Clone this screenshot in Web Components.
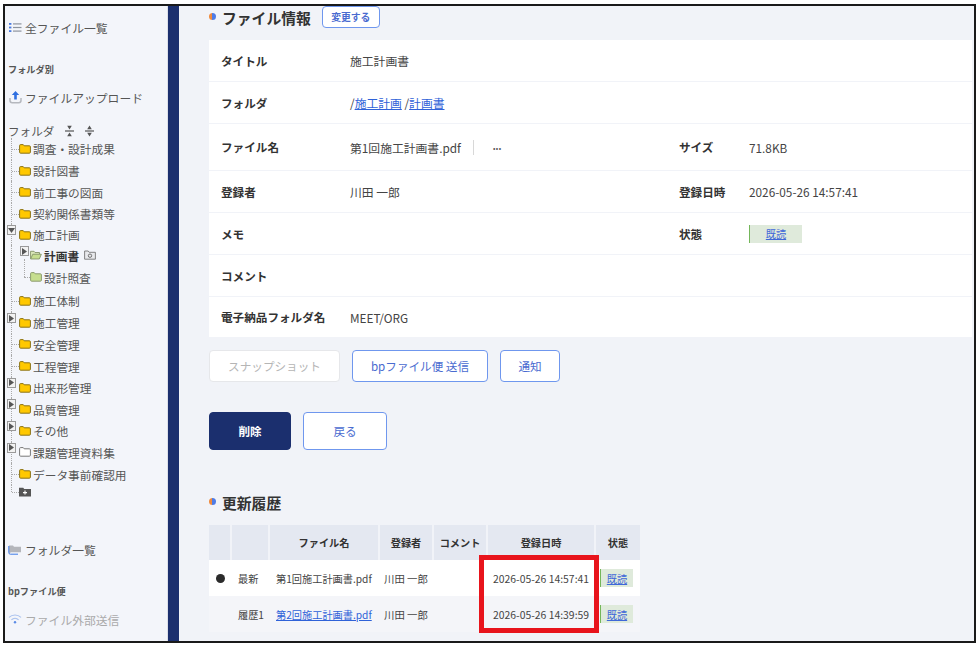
<!DOCTYPE html>
<html lang="ja">
<head>
<meta charset="utf-8">
<title>ファイル情報</title>
<style>
  html, body { margin: 0; padding: 0; background: #fff; }
  body {
    font-family: "Noto Sans CJK JP", "Noto Sans", sans-serif;
    color: #444;
  }
</style>
</head>
<body>
<app-frame>
  <side-nav slot="side"></side-nav>

  <section-title>ファイル情報<action-btn slot="action" kind="small">変更する</action-btn></section-title>

  <info-panel>
    <info-row label="タイトル" style="--h:42px">施工計画書</info-row>
    <info-row label="フォルダ" style="--h:42px">/<a href="#">施工計画</a> /<a href="#">計画書</a></info-row>
    <info-row label="ファイル名" label2="サイズ" style="--h:47px">
      <span class="file">第1回施工計画書.pdf</span><span class="more">•••</span>
      <span slot="second">71.8KB</span>
    </info-row>
    <info-row label="登録者" label2="登録日時" style="--h:42px">
      川田 一郎
      <span slot="second">2026-05-26 14:57:41</span>
    </info-row>
    <info-row label="メモ" label2="状態" style="--h:42px">
      <status-tag slot="second" wide>既読</status-tag>
    </info-row>
    <info-row label="コメント" style="--h:42px"></info-row>
    <info-row label="電子納品フォルダ名" style="--h:40px" last>MEET/ORG</info-row>
  </info-panel>

  <button-row style="--top:13px">
    <action-btn kind="disabled" style="--w:131px">スナップショット</action-btn>
    <action-btn style="--w:136px">bpファイル便 送信</action-btn>
    <action-btn style="--w:60px">通知</action-btn>
  </button-row>
  <button-row style="--top:30px">
    <action-btn kind="primary" style="--w:82px;--bh:38px">削除</action-btn>
    <action-btn style="--w:84px;--bh:38px">戻る</action-btn>
  </button-row>

  <section-title style="--top:41px">更新履歴</section-title>
  <history-table></history-table>
</app-frame>

<script>
const ICONS = {
  list: '<svg width="13" height="11" viewBox="0 0 13 11"><g fill="#4a7be0"><rect x="0" y="1" width="2.4" height="1.8"/><rect x="0" y="4.6" width="2.4" height="1.8"/><rect x="0" y="8.2" width="2.4" height="1.8"/></g><g fill="#8d949e"><rect x="4" y="1.3" width="8.5" height="1.2"/><rect x="4" y="4.9" width="8.5" height="1.2"/><rect x="4" y="8.5" width="8.5" height="1.2"/></g></svg>',
  upload: '<svg width="13" height="14" viewBox="0 0 13 14"><path d="M1 8v2.5A2.2 2.2 0 0 0 3.2 12.7h6.6A2.2 2.2 0 0 0 12 10.5V8" fill="none" stroke="#b5b8be" stroke-width="1.5"/><path d="M6.5 1 10.2 5H7.8v4.6H5.2V5H2.8z" fill="#2f6fe0"/></svg>',
  folders: '<svg width="14" height="12" viewBox="0 0 14 12"><path d="M1 10.5V2.5h4l1 1.2h7v5.6H3" fill="#b4b6bb"/><path d="M.8 3v6.6a1.6 1.6 0 0 0 1.6 1.6H10" fill="none" stroke="#3f7be6" stroke-width="1"/></svg>',
  wifi: '<svg width="14" height="10" viewBox="0 0 14 10"><g fill="none" stroke="#a9c1ee" stroke-width="1.1"><path d="M1 3.4a8.6 8.6 0 0 1 12 0"/><path d="M3.4 5.8a5.2 5.2 0 0 1 7.2 0"/></g><circle cx="7" cy="8.3" r="1.2" fill="#5b8be6"/></svg>',
  shrink: '<svg width="11" height="12" viewBox="0 0 11 12"><rect x="1" y="5.4" width="9" height="1.2" fill="#555"/><path d="M5.5 4.6 3.2.8h4.6zM5.5 7.4l2.3 3.8H3.2z" fill="#555"/></svg>',
  grow: '<svg width="11" height="12" viewBox="0 0 11 12"><rect x="1" y="5.4" width="9" height="1.2" fill="#555"/><path d="M5.5.6 7.8 4.2H3.2zM5.5 11.4 3.2 7.8h4.6z" fill="#555"/></svg>',
  camera: '<svg width="12" height="10" viewBox="0 0 12 10"><path d="M.6 9.2V1h3.6l1 1.3h6.2v6.9z" fill="#e8e9ec" stroke="#777" stroke-width=".9"/><circle cx="6" cy="5.7" r="1.7" fill="none" stroke="#666" stroke-width=".9"/></svg>'
};

function folderIcon(type) {
  const colors = {
    yellow: ['#ffc800', '#8a7318'],
    green: ['#c6de8f', '#8d9c70'],
    white: ['#fff', '#777']
  };
  if (type === 'open') {
    return '<svg width="13" height="10" viewBox="0 0 13 10"><path d="M.6 9.2V1h3.800l1 1.300h4.900v1.900" fill="#dbe8b8" stroke="#87966a"/><path d="M.7 9.3 3 4.200h9.300l-2.200 5.100z" fill="#c6de8f" stroke="#87966a"/></svg>';
  }
  if (type === 'add') {
    return '<svg width="12" height="10" viewBox="0 0 12 10"><path d="M0 9.600V.8h4.200l1 1.200H12v7.600z" fill="#555"/><path d="M6 3.600v4M4 5.600h4" stroke="#fff" stroke-width="1.100"/></svg>';
  }
  const [fill, line] = colors[type];
  return `<svg width="12" height="10" viewBox="0 0 12 10"><path d="M.6 8.2V1.600a1 1 0 0 1 1-1h2.600l1 1.200h5.200a1 1 0 0 1 1 1v5.400a1 1 0 0 1-1 1H1.600a1 1 0 0 1-1-1z" fill="${fill}" stroke="${line}" stroke-width="1"/></svg>`;
}

class AppFrame extends HTMLElement {
  constructor() {
    super();
    this.attachShadow({ mode: 'open' });
    this.shadowRoot.innerHTML = `
      <style>
        :host {
          display: flex;
          box-sizing: border-box;
          width: 973px;
          height: 639px;
          margin: 4px 0 0 3px;
          border: 2px solid #1a1a1a;
          overflow: hidden;
          background: #f1f3f8;
        }
        .bar { width: 11px; flex: none; background: #1b2f6e; }
        main { flex: 1; min-width: 0; padding: 0 2px 0 30px; }
      </style>
      <slot name="side"></slot>
      <div class="bar"></div>
      <main><slot></slot></main>
    `;
  }
}

class NavLink extends HTMLElement {
  constructor() {
    super();
    this.attachShadow({ mode: 'open' });
    this.shadowRoot.innerHTML = `
      <style>
        :host {
          display: flex;
          align-items: center;
          box-sizing: border-box;
          height: 22px;
          padding: 0 0 2px 3px;
          gap: 3px;
          font-size: 11.8px;
          color: var(--c, #555);
          margin-top: var(--top, 0);
          white-space: nowrap;
        }
        .ic { width: 14px; display: flex; justify-content: center; }
      </style>
      <span class="ic"><slot name="icon"></slot></span>
      <slot></slot>
    `;
  }
  connectedCallback() {
    const name = this.getAttribute('icon');
    if (name) {
      const holder = document.createElement('span');
      holder.slot = 'icon';
      holder.style.cssText = 'display:flex';
      holder.innerHTML = ICONS[name];
      this.appendChild(holder);
    }
  }
}

class TreeRow extends HTMLElement {
  constructor() {
    super();
    this.attachShadow({ mode: 'open' });
  }

  connectedCallback() {
    const inner = this.hasAttribute('inner');
    const toggle = this.getAttribute('toggle');
    const type = this.getAttribute('folder') || 'yellow';
    const box = toggle
      ? `<span class="box">${toggle === 'open'
          ? '<svg width="7" height="5" viewBox="0 0 7 5"><path d="M0 0h7L3.500 5z" fill="#555"/></svg>'
          : '<svg width="5" height="7" viewBox="0 0 5 7"><path d="M0 0l5 3.500L0 7z" fill="#555"/></svg>'}</span>`
      : '';
    this.shadowRoot.innerHTML = `
      <style>
        :host {
          display: flex;
          align-items: center;
          position: relative;
          height: var(--h, 21.6px);
          padding-left: ${inner ? 25 : 14}px;
          gap: 2px;
          font-size: 11.7px;
          color: #555;
          white-space: nowrap;
        }
        :host([current]) { font-weight: 700; color: #333; }
        :host::before {
          content: "";
          position: absolute;
          left: 6px;
          top: 0;
          bottom: 0;
          border-left: 1px dotted #aaa;
        }
        :host([end])::before { bottom: 50%; }
        .tick {
          position: absolute;
          left: ${inner ? 19 : 7}px;
          top: 50%;
          width: ${inner ? 6 : 7}px;
          border-top: 1px dotted #aaa;
        }
        .inner-line {
          position: absolute;
          left: 19px;
          top: -6px;
          bottom: 50%;
          border-left: 1px dotted #aaa;
        }
        .box {
          position: absolute;
          left: ${inner ? 15 : 2}px;
          top: 1px;
          box-sizing: border-box;
          width: 9px;
          height: 10px;
          display: flex;
          align-items: center;
          justify-content: center;
          border: 1px solid #999;
          background: #f2f2f2;
        }
        .ic { display: flex; width: 12px; justify-content: center; }
        .extra { display: flex; margin-left: 3px; }
      </style>
      ${this.hasAttribute('branch') ? '<span class="inner-line"></span>' : ''}
      ${toggle ? '' : '<span class="tick"></span>'}
      ${box}
      <span class="ic">${folderIcon(type)}</span>
      <span>${this.getAttribute('label') || ''}</span>
      ${this.hasAttribute('camera') ? `<span class="extra">${ICONS.camera}</span>` : ''}
    `;
  }
}

class SideNav extends HTMLElement {
  constructor() {
    super();
    this.attachShadow({ mode: 'open' });
    this.shadowRoot.innerHTML = `
      <style>
        :host {
          display: block;
          width: 163px;
          flex: none;
          box-sizing: border-box;
          padding-top: 11px;
          background: #f3f5fa;
          border-right: 1px solid #dcdfe8;
        }
        h4 {
          margin: var(--m) 0 0;
          padding-left: 3px;
          height: 14px;
          line-height: 14px;
          font-size: 9.2px;
          font-weight: 700;
          color: #555;
        }
        .head {
          display: flex;
          align-items: center;
          height: 18px;
          margin-top: 13px;
          padding-left: 3px;
          font-size: 11.6px;
          color: #555;
        }
        .head svg { margin-left: 10px; }
        .head svg + svg { margin-left: 9px; }
        .tree { height: 362px; margin-top: -1.9px; }
      </style>
      <nav-link icon="list">全ファイル一覧</nav-link>
      <h4 style="--m:23px">フォルダ別</h4>
      <nav-link icon="upload" style="--top:11px">ファイルアップロード</nav-link>
      <div class="head">フォルダ${ICONS.shrink}${ICONS.grow}</div>
      <div class="tree">
        <tree-row label="調査・設計成果"></tree-row>
        <tree-row label="設計図書"></tree-row>
        <tree-row label="前工事の図面"></tree-row>
        <tree-row label="契約関係書類等"></tree-row>
        <tree-row label="施工計画" toggle="open" style="--h:21px"></tree-row>
        <tree-row label="計画書" inner toggle="closed" folder="open" current camera style="--h:20px"></tree-row>
        <tree-row label="設計照査" inner branch folder="green" style="--h:23.6px"></tree-row>
        <tree-row label="施工体制" style="--h:23px"></tree-row>
        <tree-row label="施工管理" toggle="closed"></tree-row>
        <tree-row label="安全管理"></tree-row>
        <tree-row label="工程管理"></tree-row>
        <tree-row label="出来形管理" toggle="closed"></tree-row>
        <tree-row label="品質管理" toggle="closed"></tree-row>
        <tree-row label="その他" toggle="closed"></tree-row>
        <tree-row label="課題管理資料集" toggle="closed" folder="white"></tree-row>
        <tree-row label="データ事前確認用"></tree-row>
        <tree-row folder="add" end style="--h:15px"></tree-row>
      </div>
      <nav-link icon="folders" style="--top:38.9px">フォルダ一覧</nav-link>
      <h4 style="--m:23px">bpファイル便</h4>
      <nav-link icon="wifi" style="--top:11px;--c:#aaa">ファイル外部送信</nav-link>
    `;
  }
}

class SectionTitle extends HTMLElement {
  constructor() {
    super();
    this.attachShadow({ mode: 'open' });
    this.shadowRoot.innerHTML = `
      <style>
        :host {
          display: flex;
          align-items: center;
          height: 22px;
          margin-top: var(--top, 0);
          margin-bottom: 12px;
          font-size: 14.8px;
          font-weight: 700;
          color: #333;
        }
        .dot {
          width: 7px;
          height: 7px;
          margin: -2px 6px 0 0;
          border-radius: 50%;
          background: linear-gradient(90deg, #f08a3c 0 50%, #4f7ce6 50%);
        }
        ::slotted([slot="action"]) { margin-left: 11px; }
      </style>
      <span class="dot"></span>
      <slot></slot>
      <slot name="action"></slot>
    `;
  }
}

class ActionBtn extends HTMLElement {
  constructor() {
    super();
    this.attachShadow({ mode: 'open' });
    this.shadowRoot.innerHTML = `
      <style>
        :host {
          display: inline-flex;
          align-items: center;
          justify-content: center;
          box-sizing: border-box;
          width: var(--w, auto);
          height: var(--bh, 32px);
          border: 1.5px solid #6f97ee;
          border-radius: 4px;
          background: #fff;
          color: #4a6bd0;
          font-size: 11.6px;
          white-space: nowrap;
        }
        :host([kind="small"]) {
          width: 58px;
          height: 22px;
          font-size: 9.8px;
          border-width: 1px;
          margin-top: -1px;
        }
        :host([kind="disabled"]) {
          border-color: #e6e7ea;
          color: #b5b5b5;
        }
        :host([kind="primary"]) {
          border-color: #1b2f6e;
          background: #1b2f6e;
          color: #fff;
          font-weight: 700;
        }
      </style>
      <slot></slot>
    `;
  }
}

class ButtonRow extends HTMLElement {
  constructor() {
    super();
    this.attachShadow({ mode: 'open' });
    this.shadowRoot.innerHTML = `
      <style>
        :host {
          display: flex;
          gap: 12px;
          margin-top: var(--top, 0);
        }
      </style>
      <slot></slot>
    `;
  }
}

class InfoPanel extends HTMLElement {
  constructor() {
    super();
    this.attachShadow({ mode: 'open' });
    this.shadowRoot.innerHTML = `
      <style>
        :host { display: block; background: #fff; }
      </style>
      <slot></slot>
    `;
  }
}

class InfoRow extends HTMLElement {
  constructor() {
    super();
    this.attachShadow({ mode: 'open' });
  }

  connectedCallback() {
    const label2 = this.getAttribute('label2');
    this.shadowRoot.innerHTML = `
      <style>
        :host {
          display: grid;
          grid-template-columns: 129px 329px 70px 1fr;
          align-items: center;
          box-sizing: border-box;
          height: var(--h, 42px);
          padding-left: 12px;
          border-bottom: 1px solid #f1f3f8;
          font-size: 11.8px;
          color: #444;
        }
        :host([last]) { border-bottom: 0; }
        b { font-size: 11.6px; font-weight: 700; color: #333; white-space: nowrap; }
        .val { white-space: nowrap; }
      </style>
      <b>${this.getAttribute('label')}</b>
      <div class="val"><slot></slot></div>
      ${label2 ? `<b>${label2}</b><div class="val"><slot name="second"></slot></div>` : ''}
    `;
    // 子のリンク等は light DOM なのでここで整える
    this.querySelectorAll('a').forEach(a => { a.style.color = '#2f62d8'; });
    const file = this.querySelector('.file');
    if (file) {
      file.style.cssText = 'display:inline-block;padding-right:12px;margin-right:19px;border-right:1px solid #d8d8d8;line-height:15px';
    }
    const more = this.querySelector('.more');
    if (more) {
      more.style.cssText = 'font-size:7px;letter-spacing:.5px;color:#555;vertical-align:2px';
    }
  }
}

class StatusTag extends HTMLElement {
  constructor() {
    super();
    this.attachShadow({ mode: 'open' });
    this.shadowRoot.innerHTML = `
      <style>
        :host {
          display: inline-flex;
          align-items: center;
          justify-content: center;
          box-sizing: border-box;
          width: 33px;
          height: 18px;
          background: #dfeadb;
          border-left: 1px solid #74b65a;
          font-size: 10.2px;
        }
        :host([wide]) { width: 53px; }
        a { color: #3f68d8; }
      </style>
      <a href="#"><slot></slot></a>
    `;
  }
}

class HistoryTable extends HTMLElement {
  constructor() {
    super();
    this.attachShadow({ mode: 'open' });
    this.shadowRoot.innerHTML = `
      <style>
        :host {
          display: block;
          position: relative;
          width: 431px;
          margin-top: 0;
          font-size: 10.2px;
          color: #444;
        }
        table {
          width: 431px;
          table-layout: fixed;
          border-collapse: separate;
          border-spacing: 0;
        }
        th {
          height: 35px;
          padding: 0;
          box-sizing: border-box;
          background: #e4e8f1;
          border-right: 2px solid #f1f3f8;
          font-size: 10.2px;
          font-weight: 700;
          color: #333;
        }
        th:last-child { border-right: 0; }
        td {
          height: 36px;
          padding: 0 0 0 6px;
          box-sizing: border-box;
          white-space: nowrap;
          background: #fff;
        }
        tr.old td { background: #f4f5f9; }
        td.mark { padding-left: 7px; }
        td.by { padding-left: 4px; font-size: 10.4px; }
        td.date { padding-left: 5px; font-size: 10.4px; }
        .dot {
          display: block;
          width: 9px;
          height: 9px;
          border-radius: 50%;
          background: #2b2b2b;
        }
        td.tag { padding-left: 4px; }
        a { color: #2f62d8; }
        .callout {
          position: absolute;
          left: 270px;
          top: 30px;
          width: 120px;
          height: 78px;
          box-sizing: border-box;
          border: 5px solid #e8141c;
        }
      </style>
      <table>
        <colgroup>
          <col style="width:23px"><col style="width:38px"><col style="width:110px"><col style="width:54px">
          <col style="width:54px"><col style="width:108px"><col style="width:44px">
        </colgroup>
        <thead>
          <tr><th></th><th></th><th>ファイル名</th><th>登録者</th><th>コメント</th><th>登録日時</th><th>状態</th></tr>
        </thead>
        <tbody>
          <tr>
            <td class="mark"><span class="dot"></span></td>
            <td>最新</td>
            <td>第1回施工計画書.pdf</td>
            <td class="by">川田 一郎</td>
            <td></td>
            <td class="date">2026-05-26 14:57:41</td>
            <td class="tag"><status-tag>既読</status-tag></td>
          </tr>
          <tr class="old">
            <td></td>
            <td>履歴1</td>
            <td><a href="#">第2回施工計画書.pdf</a></td>
            <td class="by">川田 一郎</td>
            <td></td>
            <td class="date">2026-05-26 14:39:59</td>
            <td class="tag"><status-tag>既読</status-tag></td>
          </tr>
        </tbody>
      </table>
      <div class="callout"></div>
    `;
  }
}

customElements.define('app-frame', AppFrame);
customElements.define('nav-link', NavLink);
customElements.define('tree-row', TreeRow);
customElements.define('side-nav', SideNav);
customElements.define('section-title', SectionTitle);
customElements.define('action-btn', ActionBtn);
customElements.define('button-row', ButtonRow);
customElements.define('info-panel', InfoPanel);
customElements.define('info-row', InfoRow);
customElements.define('status-tag', StatusTag);
customElements.define('history-table', HistoryTable);
</script>
</body>
</html>
